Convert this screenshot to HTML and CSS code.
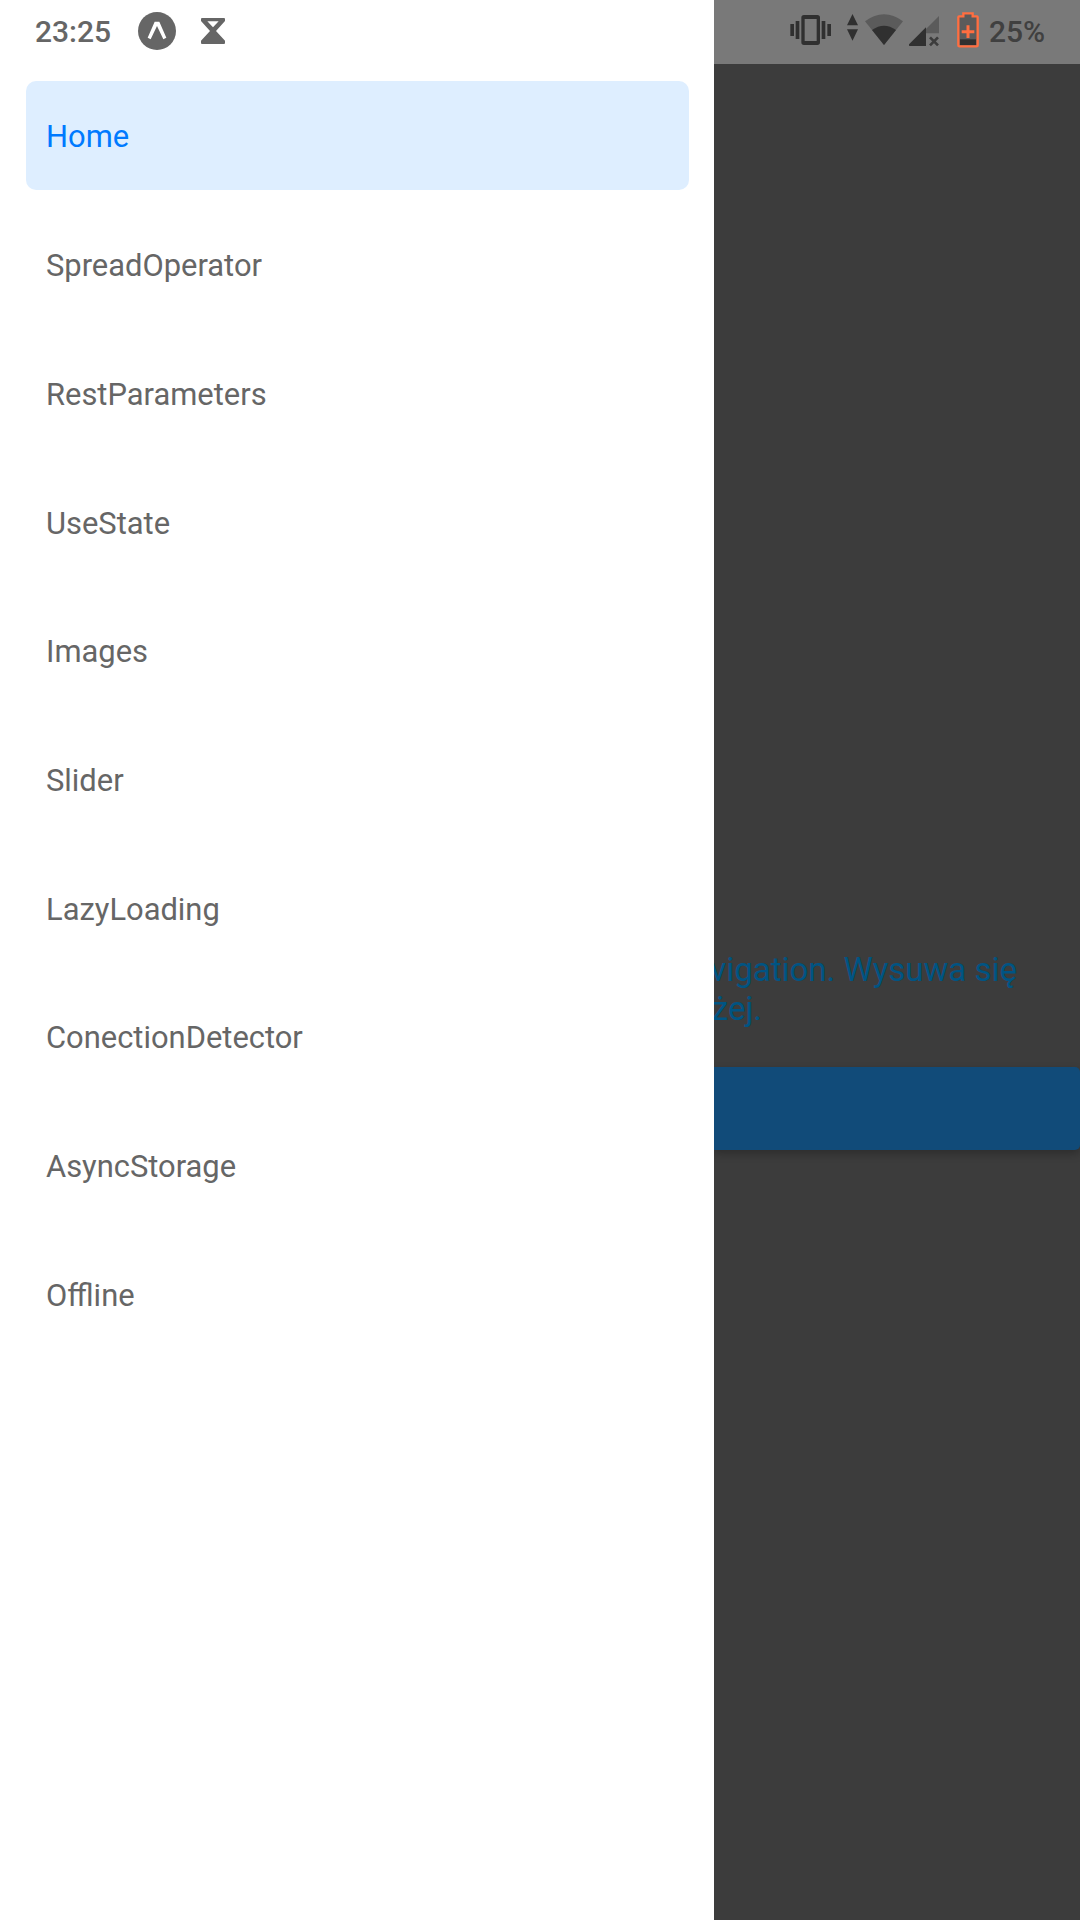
FILE: index.html
```html
<!DOCTYPE html>
<html lang="pl">
<head>
<meta charset="utf-8">
<title>Home</title>
<link rel="stylesheet" href="styles.css">
</head>
<body>
<div class="app">
  <aside class="drawer">
    <header class="status status-left">
      <span class="time">23:25</span>
      <svg class="expo" width="38" height="38" viewBox="0 0 114 114"><circle cx="57" cy="57" r="57" fill="#666"/><path d="M50 29H64L85 77L76 82L57 42L38 82L29 77Z" fill="#fff"/></svg>
      <svg class="hourglass" width="24" height="26" viewBox="0 0 72 78"><path fill="#666" fill-rule="evenodd" d="M3 0H69Q72 0 72 3V9L45 39L72 68V75Q72 78 69 78H3Q0 78 0 75V68L27 39L0 9V3Q0 0 3 0ZM19 10L36 28L53 10Z"/></svg>
    </header>
    <nav class="menu">
      <a class="item active">Home</a>
      <a class="item">SpreadOperator</a>
      <a class="item">RestParameters</a>
      <a class="item">UseState</a>
      <a class="item">Images</a>
      <a class="item">Slider</a>
      <a class="item">LazyLoading</a>
      <a class="item">ConectionDetector</a>
      <a class="item">AsyncStorage</a>
      <a class="item">Offline</a>
    </nav>
  </aside>
  <main class="screen">
    <header class="status status-right">
      <svg class="vibrate" width="42" height="32" viewBox="0 0 126 96" fill="#303030"><path fill-rule="evenodd" d="M42 3H82Q90 3 90 11V85Q90 93 82 93H42Q34 93 34 85V11Q34 3 42 3ZM44 15V81H80V15Z"/><path d="M1 30h11v36H1zM17 21h11v54H17zM95 21h11v54H95zM112 30h11v36h-11z"/></svg>
      <svg class="arrows" width="11" height="27" viewBox="0 0 33 81" fill="#303030"><path d="M16.500 0L33 34H0ZM0 46H33L16.500 80Z"/></svg>
      <svg class="wifi" width="38" height="31" viewBox="0 0 114 93"><path d="M57 93L0 22Q57 -20 114 22Z" fill="#5b5b5b"/><path d="M57 93L21 48Q57 22 93 48Z" fill="#303030"/></svg>
      <svg class="signal" width="30" height="31" viewBox="0 0 90 93"><path d="M90 0V52H51V39Z" fill="#5b5b5b"/><path d="M51 34V90H2Q-2 88 1 84Z" fill="#303030"/><path d="M63 64L87 88M87 64L63 88" stroke="#3c3c3c" stroke-width="8"/></svg>
      <svg class="battery" width="22" height="36" viewBox="0 0 66 108"><path d="M6 14H21V5H45V14H60V102H6Z" fill="#5b5b5b"/><path d="M9 82H57V99H9Z" fill="#303030"/><path d="M6 13H19V4H47V13H60Q62 13 62 16V99Q62 103 58 103H8Q4 103 4 99V16Q4 13 6 13Z" fill="none" stroke="#ff6e40" stroke-width="7"/><path d="M33 40V78M14 59H52" stroke="#ff6e40" stroke-width="9"/></svg>
      <span class="percent">25%</span>
    </header>
    <div class="content">
      <div class="copy"><p class="line">vigation. Wysuwa się</p><p class="line line-end">żej.</p></div>
      <div class="button"></div>
    </div>
  </main>
</div>
</body>
</html>
```
FILE: styles.css
```css
* { box-sizing: border-box; }
body { margin: 0; font-family: Roboto, sans-serif; background: #fff; }
.app { display: grid; grid-template-columns: 714px 366px; height: 1920px; overflow: hidden; }
.drawer { background: #fff; color: #666; }
.status { display: flex; height: 64px; font-size: 30px; line-height: 36px; font-weight: 500; }
.status-left { padding-left: 35px; }
.time { width: 103px; padding-top: 14px; }
.expo { margin-top: 12px; }
.hourglass { margin: 18px 0 0 25px; }
.menu { display: flex; flex-direction: column; gap: 19.7px; padding: 17px 25px 0 26px; }
.item { display: flex; align-items: center; height: 109px; padding: 3px 0 0 20px; border-radius: 10px; font-size: 30.9px; }
.active { padding-top: 1px; background: #deeeff; color: #007aff; }
.screen { background: #3c3c3c; overflow: hidden; }
.status-right { background: #797979; color: #404040; padding-left: 76px; }
.vibrate { margin-top: 14px; }
.arrows { margin: 14px 0 0 15px; }
.wifi { margin: 14px 0 0 7px; }
.signal { margin: 16px 0 0 6px; }
.battery { margin: 12px 0 0 18px; }
.percent { margin-left: 10px; padding-top: 14px; }
.content { padding-top: 886px; }
.copy { height: 117px; color: #005483; font-size: 33px; line-height: 39px; white-space: nowrap; }
.line { display: flex; justify-content: flex-end; margin: 0; padding-right: 63px; }
.line-end { padding-right: 318px; }
.button { height: 83px; background: #114b79; border-radius: 0 5px 5px 0; box-shadow: 0 4px 8px rgba(0, 0, 0, .25); }
```
